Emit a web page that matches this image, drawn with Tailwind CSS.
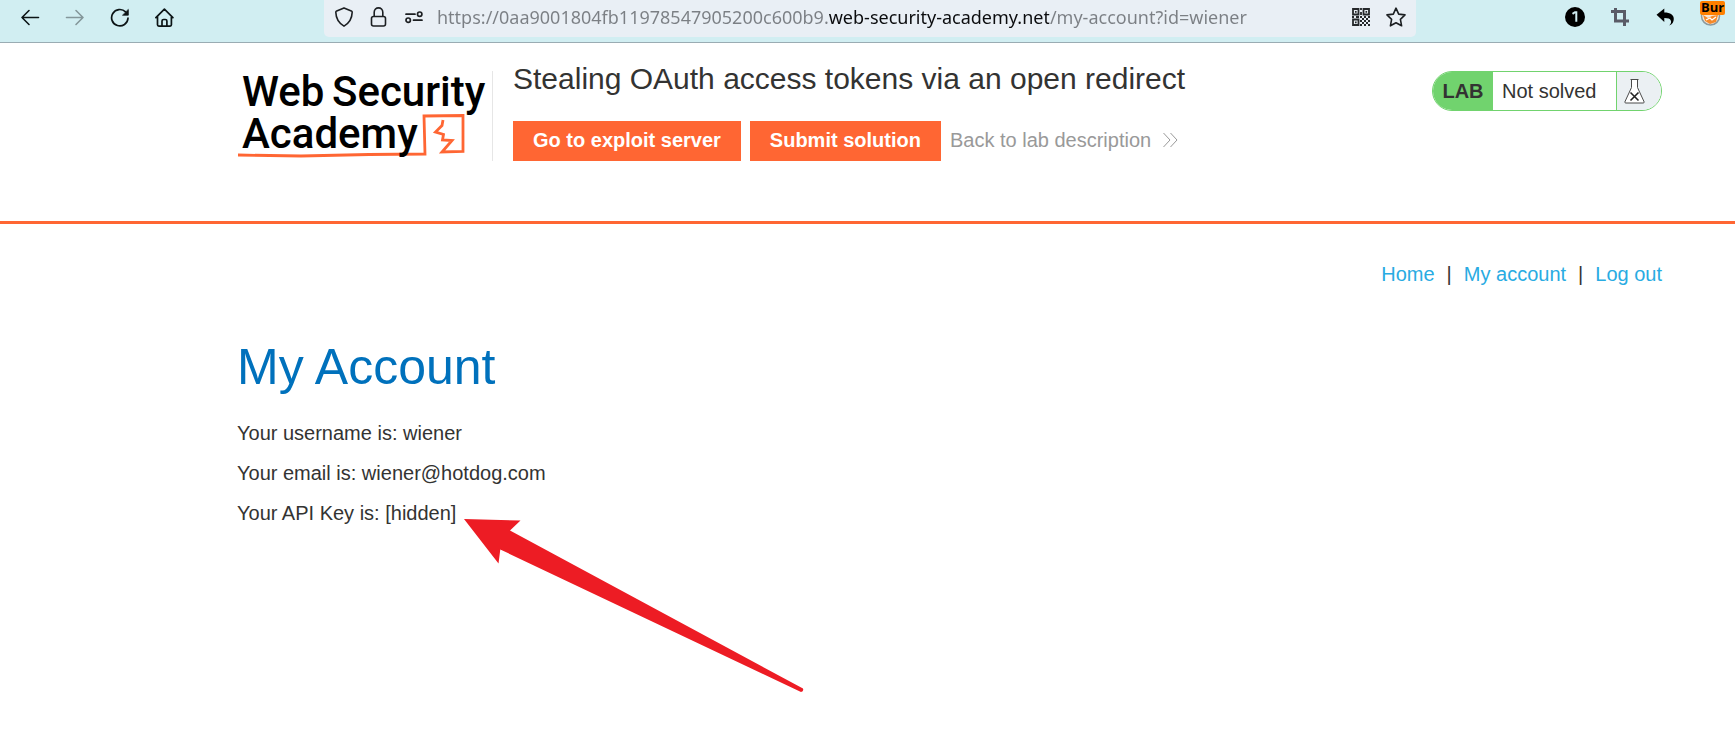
<!DOCTYPE html>
<html lang="en">
<head>
<meta charset="utf-8">
<meta name="viewport" content="width=device-width, initial-scale=1">
<title>Stealing OAuth access tokens via an open redirect</title>
<script src="https://cdn.jsdelivr.net/npm/@tailwindcss/browser@4"></script>
</head>
<body class="min-h-screen overflow-x-hidden bg-white font-['Liberation_Sans',Arial,sans-serif] text-xl text-[#333332]">

<!-- Browser toolbar -->
<div class="flex h-[43px] items-start border-b border-[#9aacb3] bg-[#d1eef2] text-black">
  <div class="flex w-[324px] shrink-0 gap-[25px] pt-2 pl-5">
    <button type="button" aria-label="Back" class="size-5">
      <svg viewBox="0 0 20 20" class="size-5" fill="none" stroke="#0c1416" stroke-width="1.6" stroke-linecap="round" stroke-linejoin="round"><path d="M18.5 9.5H2M9 2.5l-7 7 7 7"/></svg>
    </button>
    <button type="button" aria-label="Forward" class="size-5" disabled>
      <svg viewBox="0 0 20 20" class="size-5" fill="none" stroke="#84979b" stroke-width="1.6" stroke-linecap="round" stroke-linejoin="round"><path d="M1.5 9.5H18M11 2.5l7 7-7 7"/></svg>
    </button>
    <button type="button" aria-label="Reload" class="size-5">
      <svg viewBox="0 0 20 20" class="size-5" fill="none" stroke="#0c1416" stroke-width="1.7" stroke-linecap="round"><path d="M18 10.2A8.2 8.2 0 1 1 15.6 3.9"/><path d="M18.3 1.8v5.4h-5.4z" fill="#0c1416" stroke-width=".8" stroke-linejoin="round"/></svg>
    </button>
    <button type="button" aria-label="Home" class="size-5">
      <svg viewBox="0 0 20 20" class="size-5" fill="none" stroke="#0c1416" stroke-width="1.7" stroke-linecap="round" stroke-linejoin="round"><path d="M.9 9.6l8.5-8.5 8.5 8.5M2.5 8.3v8.5q0 1.3 1.3 1.3h11.3q1.3 0 1.3-1.3V8.3M7 18v-4.9q0-1.6 1.6-1.6h1.7q1.6 0 1.6 1.6V18"/></svg>
    </button>
  </div>

  <div class="flex h-[37px] min-w-0 flex-1 gap-[15px] rounded-b-[5px] bg-[#e9eff5] pt-[7px] pr-[10px] pl-[10px]">
    <button type="button" aria-label="Tracking protection" class="size-5 shrink-0">
      <svg viewBox="0 0 20 20" class="size-5" fill="none" stroke="#1c1f22" stroke-width="1.6" stroke-linejoin="round"><path d="M10 .9l7.3 3c.6.3.9.7.9 1.3C18 11.4 15.5 15.9 10 19.1 4.500 15.900 2 11.400 1.800 5.200c0-.6.3-1 .9-1.300z"/></svg>
    </button>
    <button type="button" aria-label="Site security" class="size-5 shrink-0">
      <svg viewBox="0 0 20 20" class="size-5" fill="none" stroke="#1c1f22" stroke-width="1.6"><rect x="2.5" y="9.5" width="14" height="9.5" rx="2"/><path d="M5.2 9.5V5.2a4.3 4.3 0 0 1 8.600 0v4.300"/></svg>
    </button>
    <button type="button" aria-label="Site permissions" class="size-5 shrink-0">
      <svg viewBox="0 0 20 20" class="size-5" fill="none" stroke="#1c1f22" stroke-width="1.7" stroke-linecap="round"><path d="M2 7.200h9M9.500 13.200h8.500"/><circle cx="15.700" cy="7.200" r="2.200"/><circle cx="4.200" cy="13.200" r="2.200"/></svg>
    </button>
    <input type="text" aria-label="Address" value="https://0aa9001804fb11978547905200c600b9.web-security-academy.net/my-account?id=wiener" class="-mt-0.5 -ml-0.5 h-6 min-w-0 flex-1 bg-[linear-gradient(90deg,#7b7f84_392px,#0b0c0e_392px,#0b0c0e_612px,#7b7f84_612px)] bg-clip-text font-['Noto_Sans',sans-serif] text-lg leading-6 text-transparent outline-none">
    <button type="button" aria-label="QR code" class="size-5 shrink-0">
      <svg viewBox="0 0 20 20" class="size-5" fill="none" stroke="#25282b" stroke-width="1.8"><path d="M2 2h5.500v5.500H2zM12.500 2H18v5.500h-5.500zM2 12.500h5.500V18H2z"/><path d="M4 4.800h1.600M14.500 4.800h1.600M4 15.300h1.600M10 1v2M10 5v3M1 10h2M5 10h3M9 10h2M13 10h2M17 10h2M11 12h2M15 12h2M9 14h2M13 14h2M17 14h2M11 16h2M15 16h2M9 18h2M13 18h2M17 18h2"/></svg>
    </button>
    <button type="button" aria-label="Bookmark" class="size-5 shrink-0">
      <svg viewBox="0 0 20 20" class="size-5" fill="none" stroke="#1c1f22" stroke-width="1.6" stroke-linejoin="round"><path d="M10 1.200l2.700 5.900 6.300.8-4.600 4.400 1.200 6.500L10 15.700l-5.600 3.100 1.200-6.500L1 7.900l6.300-.8z"/></svg>
    </button>
  </div>

  <div class="flex w-[319px] shrink-0 items-start justify-end gap-[25px] pr-[10px]">
    <button type="button" aria-label="Password manager" class="mt-[7px] size-5">
      <svg viewBox="0 0 20 20" class="size-5"><circle cx="10" cy="10" r="10" fill="#000"/><path d="M7.500 6.800L10 5.200h1.300v9.600" fill="none" stroke="#d1eef2" stroke-width="2"/></svg>
    </button>
    <button type="button" aria-label="Screenshot" class="mt-[7px] size-5">
      <svg viewBox="0 0 20 20" class="size-5" fill="none" stroke="#5a5b67" stroke-width="3"><path d="M5.500 1v13H19M1 4.500h13.500V19"/></svg>
    </button>
    <button type="button" aria-label="Undo" class="mt-[7px] size-5">
      <svg viewBox="0 0 20 20" class="size-5" fill="#000"><path d="M1.500 7.800L9.300 1.500v4C15.500 5.500 18.800 8 18.800 12c0 3-1.500 5.400-4.600 6.400 1.800-1.800 2.300-3.500 1.600-5-.7-1.600-2.700-2.400-6.500-2.400v4z"/></svg>
    </button>
    <button type="button" aria-label="Burp proxy" class="relative h-[27px] w-[25px]">
      <svg viewBox="0 0 25 27" class="h-[27px] w-[25px]"><circle cx="10.500" cy="16" r="9" fill="#f6e7d8" stroke="#8b9a9e" stroke-width="1.500"/><path d="M3 15l5 3 4-2 6-1-2 7-6 2-5-3z" fill="#f58a2a"/><path d="M6 20l4-2 2 2 4-3" fill="none" stroke="#fff" stroke-width="1.300"/></svg>
      <span class="absolute inset-x-0 top-px h-[14px] rounded-xs bg-[#ff8000] text-center font-['Open_Sans',sans-serif] text-[13px] leading-[13px] font-bold text-black">Bur</span>
    </button>
  </div>
</div>

<!-- Lab header -->
<header class="flex h-[181px] items-start border-b-3 border-[#ff6633] pt-[18px] pr-[73px] pl-[237px]">
  <a href="#" aria-label="Web Security Academy" class="mt-[10px] h-[90px] w-[256px] shrink-0 border-r border-[#e6e6e6]">
    <svg viewBox="0 0 255 90" class="h-[90px] w-[255px] overflow-visible" font-family="Roboto, sans-serif" font-weight="500" font-size="42" fill="#000">
      <path d="M206 49l-1 5.500-6.500 6.500 8 2.500-1 5.500 9.500.5-10 11.500 21-.5v-36l-39 .5 1 38-56 .5-68 1.500-63-1" fill="none" stroke="#ff6633" stroke-width="2.800"/>
      <text x="5" y="35">Web</text><text x="95" y="35">Security</text>
      <text x="5" y="77">Academy</text>
    </svg>
  </a>
  <div class="min-w-0 flex-1 pl-5">
    <h2 class="text-[30px] leading-9">Stealing OAuth access tokens via an open redirect</h2>
    <div class="mt-6 flex items-center gap-[9px]">
      <button type="button" class="h-10 bg-[#ff6633] px-5 pb-0.5 font-bold whitespace-nowrap text-white">Go to exploit server</button>
      <button type="button" class="h-10 bg-[#ff6633] px-5 pb-0.5 font-bold whitespace-nowrap text-white">Submit solution</button>
      <a href="#" class="flex items-center gap-3 pb-0.5 whitespace-nowrap text-[#999]">Back to lab description
        <svg viewBox="0 0 15 16" class="h-4 w-[15px]" fill="none" stroke="#999" stroke-width="1"><path d="M.5 1l6.500 7-6.500 7M7.500 1l6.500 7-6.500 7"/></svg>
      </a>
    </div>
  </div>
  <div class="mt-[10px] flex h-10 w-[230px] shrink-0 overflow-hidden rounded-[20px] border border-[#71d36e] bg-white">
    <span class="flex w-[60px] items-center justify-center bg-[#71d36e] text-xl font-bold">LAB</span>
    <span class="flex flex-1 items-center pl-[9px]">Not solved</span>
    <span class="flex w-[45px] items-center border-l border-[#71d36e] bg-[#ebf0f3] pl-[7px]">
      <svg viewBox="0 0 21 26" class="h-[26px] w-[21px]" fill="#fff" stroke="#4b4b4b" stroke-width="1"><path d="M6.500 1.500h8M7.500 1.500v8L.8 24q0 1 1 1h17.400q1 0 1-1L13.500 9.500v-8"/><path d="M6.500 14.500l8 8M14.500 14.500l-8 8" stroke="#222" stroke-width="1.600"/></svg>
    </span>
  </div>
</header>

<!-- Account page -->
<main class="pt-9 pr-[73px] pl-[237px]">
  <nav class="flex justify-end gap-3 leading-7 text-[#29abe2]">
    <a href="#">Home</a><span class="text-[#333332]">|</span>
    <a href="#">My account</a><span class="text-[#333332]">|</span>
    <a href="#">Log out</a>
  </nav>
  <h1 class="mt-[50px] text-[50px] leading-[58px] text-[#0071bc]">My Account</h1>
  <div class="relative mt-[23px] flex flex-col gap-3 leading-7">
    <p>Your username is: wiener</p>
    <p>Your email is: wiener@hotdog.com</p>
    <p>Your API Key is: [hidden]</p>
    <!-- Arrow pointing at the API key -->
    <svg viewBox="0 0 340 174" class="absolute top-[100px] left-[227px] h-[174px] w-[340px]" fill="#ed1c24"><path d="M0 0L56.500 1.500L46 11.500L339 169.500Q340 172.500 337 173L36.300 30.500L34.500 44.500Z"/></svg>
  </div>
</main>
</body>
</html>
